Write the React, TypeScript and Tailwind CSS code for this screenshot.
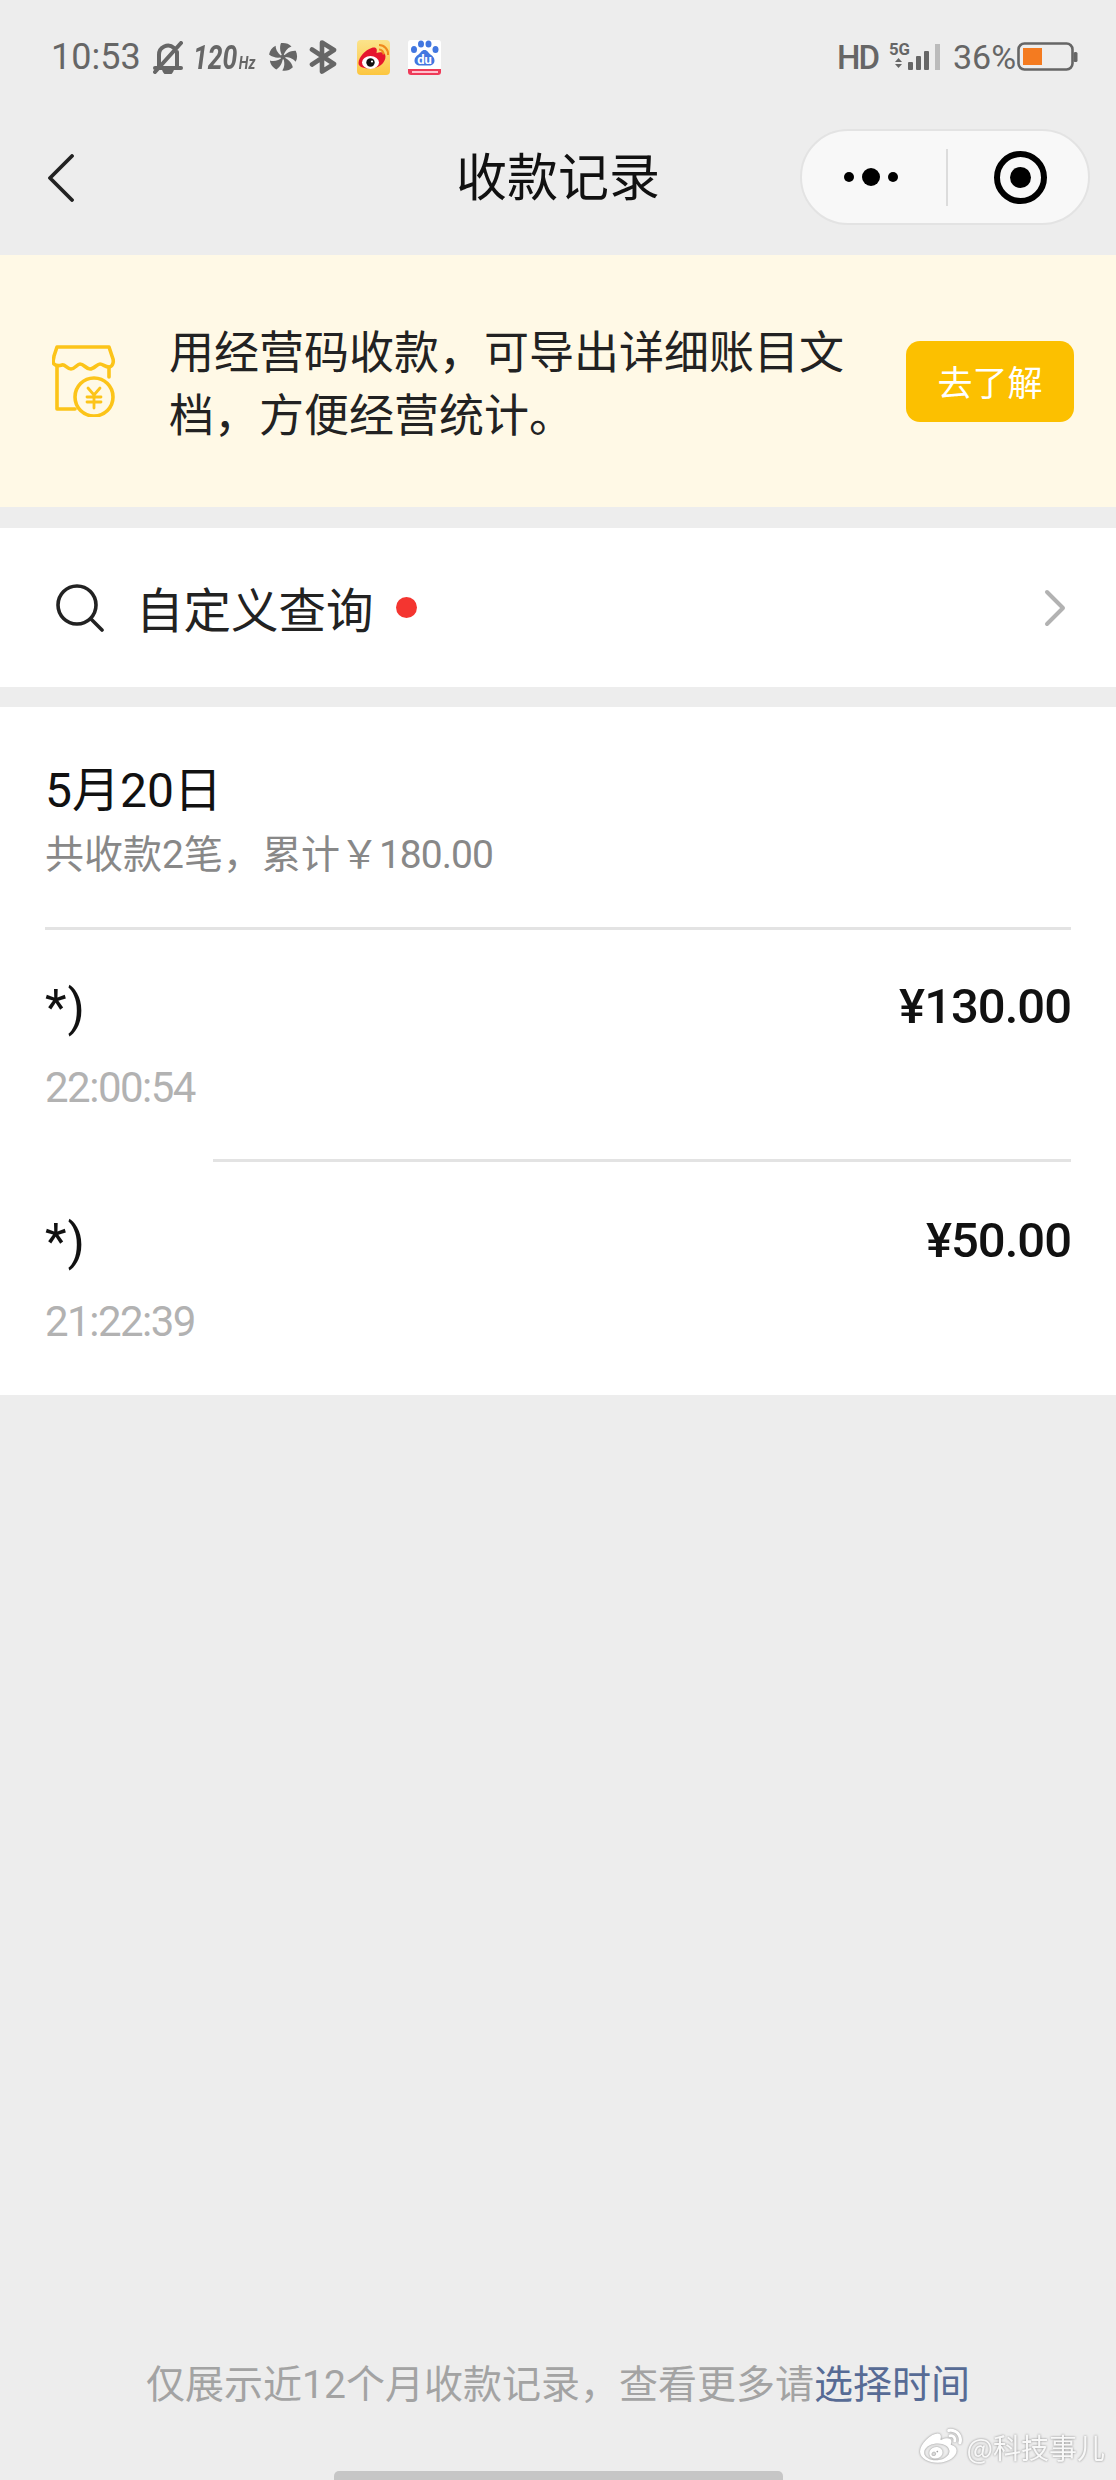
import React from 'react';
import { FaWeibo } from 'react-icons/fa';

function BellOff() {
  return (
    <svg width="30" height="33" viewBox="0 0 30 33" className="ml-[15px] shrink-0" fill="none" stroke="#666" strokeWidth="4" strokeLinecap="round" strokeLinejoin="round">
      <path d="M6 26V14a9 9 0 0 1 15-7" />
      <path d="M24 11v15" />
      <path d="M2 27h26" />
      <path d="M2 31 28 2" />
      <path d="M11 28a4 4 0 0 0 8 0z" fill="#666" />
    </svg>
  );
}

function Fan() {
  const blade = 'M15 15C12.500 11 11 6 13 1c4-.5 8 .5 10.500 3.500C19 6 16.500 10 15 15z';
  return (
    <svg width="30" height="30" viewBox="0 0 30 30" className="ml-[13px] shrink-0" fill="#666">
      {[0, 72, 144, 216, 288].map((r) => (
        <path key={r} d={blade} transform={`rotate(${r} 15 15)`} />
      ))}
      <circle cx="15" cy="15" r="2.500" />
    </svg>
  );
}

function Bluetooth() {
  return (
    <svg width="28" height="34" viewBox="0 0 28 34" className="ml-[11px] shrink-0" fill="none" stroke="#666" strokeWidth="4.600" strokeLinejoin="round" strokeLinecap="round">
      <path d="M3 9.500 25 24 13 31.500V2.500L25 10 3 24.500" />
    </svg>
  );
}

function WeiboApp() {
  return (
    <div className="ml-[20px] h-[35px] w-[33px] shrink-0 overflow-hidden rounded-[4px] bg-gradient-to-b from-[#fbe38a] to-[#fcc63e]">
      <svg viewBox="0 0 33 35" width="33" height="35" className="block">
        <path d="M1.500 23c0-6 7-13 13-15 5-1.500 6 1 5 5 5-1.500 9-.5 9 3.500 0 6.500-7 12-15 12-7 0-12-1.500-12-5.500z" fill="#e6162d" />
        <ellipse cx="13.500" cy="22.500" rx="8.500" ry="6.500" fill="#fff" />
        <circle cx="13.500" cy="22.500" r="4.200" fill="#111" />
        <circle cx="15" cy="21.500" r="1.100" fill="#fff" />
        <path d="M22 5a9 9 0 0 1 9 10" stroke="#f08a1d" strokeWidth="2" fill="none" />
        <path d="M22 9.500a4.500 4.500 0 0 1 4.500 5" stroke="#f08a1d" strokeWidth="2" fill="none" />
      </svg>
    </div>
  );
}

function BaiduApp() {
  return (
    <div className="ml-[18px] flex h-[35px] w-[33px] shrink-0 flex-col overflow-hidden rounded-[3px] bg-white">
      <svg viewBox="0 0 33 29" width="33" height="29" className="block">
        <g fill="#4277e0">
          <ellipse cx="6" cy="9.500" rx="3" ry="3.500" />
          <ellipse cx="13" cy="4" rx="3" ry="3.500" />
          <ellipse cx="20.500" cy="4" rx="3" ry="3.500" />
          <ellipse cx="27.500" cy="9.500" rx="3" ry="3.500" />
          <path d="M16.500 10c3 0 3.500 2.500 6 4.500 2.500 1.500 4 3.500 4 6 0 3.500-2.500 5-5.500 5h-9c-3 0-5.500-1.500-5.500-5 0-2.500 1.500-4.500 4-6 2.500-2 3-4.500 6-4.500z" />
        </g>
        <text x="16.500" y="24" textAnchor="middle" fontSize="13" fontWeight="700" fontFamily="Roboto" fill="#fff">du</text>
      </svg>
      <div className="flex flex-1 items-center justify-center bg-[#ee3a58]">
        <div className="h-[2px] w-[26px] bg-[#ffc0cc]" />
      </div>
    </div>
  );
}

function Signal() {
  return (
    <svg width="52" height="36" viewBox="0 -6 52 36" className="ml-[12px] mb-[6px] shrink-0 self-center">
      <text x="0" y="13" fontSize="17" fontWeight="700" fontFamily="Roboto" fill="#666" textLength="21" lengthAdjust="spacingAndGlyphs">5G</text>
      <path d="M6 20l3.500-4 3.500 4zM6 22l3.500 4 3.500-4z" fill="#666" />
      <rect x="19" y="20" width="5" height="8" rx="1" fill="#666" />
      <rect x="27" y="14" width="5" height="14" rx="1" fill="#666" />
      <rect x="35" y="9" width="5" height="19" rx="1" fill="#666" />
      <rect x="46" y="2" width="5" height="26" fill="#bbb" />
    </svg>
  );
}

function Battery() {
  return (
    <svg width="61" height="30" viewBox="0 0 61 30" className="ml-[4px] shrink-0">
      <rect x="1.500" y="1.500" width="54" height="26" rx="6" fill="none" stroke="#666" strokeWidth="2.600" />
      <rect x="6" y="6" width="19" height="17" fill="#f47b20" />
      <rect x="56.500" y="10" width="4" height="10" rx="1.500" fill="#666" />
    </svg>
  );
}

function StatusBar() {
  return (
    <div className="flex h-[112px] items-center justify-between pl-[51px] pr-[38px] pt-[2px] font-['Roboto','Noto_Sans_CJK_SC',sans-serif] text-[#666]">
      <div className="flex items-center">
        <span className="w-[87px] whitespace-nowrap text-[36px] leading-none">10:53</span>
        <BellOff />
        <span className="ml-[10px] flex w-[62px] origin-left scale-x-[0.78] items-baseline whitespace-nowrap text-[34px] font-bold italic leading-none">
          120<span className="ml-[2px] text-[18px]">Hz</span>
        </span>
        <Fan />
        <Bluetooth />
        <WeiboApp />
        <BaiduApp />
      </div>
      <div className="flex items-center">
        <span className="w-[40px] whitespace-nowrap text-[33px] font-medium leading-none tracking-[-2px]">HD</span>
        <Signal />
        <span className="ml-[12px] w-[60px] whitespace-nowrap text-[34px] leading-none">36%</span>
        <Battery />
      </div>
    </div>
  );
}

function NavBar() {
  return (
    <div className="relative mb-[13px] flex h-[130px] items-center justify-between pl-[48px] pr-[26px]">
      <svg width="26" height="48" viewBox="0 0 26 48" className="mt-[2px]" fill="none" stroke="#222" strokeWidth="3.800" strokeLinecap="round" strokeLinejoin="round">
        <path d="M24 2 2 24l22 22" />
      </svg>
      <h1 className="absolute left-0 right-0 top-[27px] text-center text-[51px] font-normal leading-[70px] text-[#111]">收款记录</h1>
      <div className="flex h-[96px] w-[290px] items-center rounded-full border-2 border-[#e3e3e3] bg-[#f8f8f8]">
        <div className="flex w-[144px] items-center justify-center gap-[8px] pr-[6px]">
          <span className="h-[10px] w-[10px] rounded-full bg-black" />
          <span className="h-[18px] w-[18px] rounded-full bg-black" />
          <span className="h-[10px] w-[10px] rounded-full bg-black" />
        </div>
        <div className="h-[57px] w-[2px] bg-[#dcdcdc]" />
        <div className="flex flex-1 items-center justify-center pl-[4px]">
          <div className="flex h-[53px] w-[53px] items-center justify-center rounded-full border-[6px] border-black">
            <span className="h-[21px] w-[21px] rounded-full bg-black" />
          </div>
        </div>
      </div>
    </div>
  );
}

function StoreIcon() {
  return (
    <svg width="64" height="72" viewBox="0 0 64 72" className="shrink-0" fill="none" stroke="#fcc419" strokeWidth="3.600" strokeLinejoin="round" strokeLinecap="round">
      <path d="M5 2h52l4 12c1 4-1 8-4 8-4 0-6-3-9-3-3 0-6 5-10 5s-6-5-10-5c-3 0-5 5-9 5s-6-5-9-4c-3 1-6 1-8-1-2-2 0-6 0-8z" />
      <path d="M5 22v42h18" />
      <path d="M57 22v10" />
      <circle cx="42" cy="52" r="19" fill="#fff9e6" />
      <path d="M36 43l6 7 6-7M35 52h14M35 57h14M42 50v13" strokeWidth="2.800" />
    </svg>
  );
}

function Banner() {
  return (
    <div className="flex h-[252px] items-center bg-[#fff9e6] pl-[52px] pr-[42px]">
      <StoreIcon />
      <p className="ml-[53px] w-[690px] text-[45px] leading-[63px] text-[#222]">用经营码收款，可导出详细账目文档，方便经营统计。</p>
      <div className="ml-auto flex h-[81px] w-[168px] items-center justify-center rounded-[14px] bg-[#fcc000] text-[35px] text-white">去了解</div>
    </div>
  );
}

function SearchRow() {
  return (
    <div className="mt-[21px] flex h-[159px] items-center bg-white pl-[56px] pr-[50px]">
      <svg width="48" height="48" viewBox="0 0 48 48" fill="none" stroke="#222" strokeWidth="3.600" strokeLinecap="round">
        <circle cx="21" cy="21" r="19" />
        <path d="m35 35 11 11" />
      </svg>
      <span className="ml-[32px] text-[47.500px] leading-none text-[#222]">自定义查询</span>
      <span className="ml-[22px] h-[21px] w-[21px] rounded-full bg-[#f43530]" />
      <svg width="22" height="38" viewBox="0 0 22 38" className="ml-auto" fill="none" stroke="#b2b2b2" strokeWidth="4" strokeLinecap="round" strokeLinejoin="round">
        <path d="m3 3 16 16L3 35" />
      </svg>
    </div>
  );
}

function Row({ time, amount, h }: { time: string; amount: string; h: string }) {
  return (
    <div className={`flex justify-between ${h}`}>
      <div className="flex flex-col">
        <span className="mt-[47px] h-[62px] text-[50px] leading-[62px] tracking-[1px] text-[#111]">*)</span>
        <span className="mt-[24px] text-[42px] leading-[50px] tracking-[-1.500px] text-[#b2b2b2]">{time}</span>
      </div>
      <span className="mt-[46px] h-[62px] text-[49px] font-medium leading-[62px] tracking-[-1px] text-[#111]">{amount}</span>
    </div>
  );
}

function Records() {
  return (
    <div className="mt-[20px] flex h-[688px] flex-col bg-white pl-[45px] pr-[45px] font-['Roboto','Noto_Sans_CJK_SC',sans-serif]">
      <div className="h-[220px] pt-[54px]">
        <div className="text-[48px] leading-[60px] text-[#111]">5月20日</div>
        <div className="mt-[6px] text-[39px] leading-[56px] text-[#888]">
          共收款2笔，累计￥<span className="tracking-[-1px]">180.00</span>
        </div>
      </div>
      <div className="h-[3px] bg-[#e3e3e3]" />
      <Row time="22:00:54" amount="¥130.00" h="h-[229px]" />
      <div className="ml-[168px] h-[3px] bg-[#e3e3e3]" />
      <Row time="21:22:39" amount="¥50.00" h="flex-1 pt-[2px]" />
    </div>
  );
}

export default function App() {
  return (
    <div className="relative flex h-[2480px] w-[1116px] flex-col overflow-hidden bg-[#ededed] font-['Noto_Sans_CJK_SC',sans-serif]">
      <StatusBar />
      <NavBar />
      <Banner />
      <SearchRow />
      <Records />
      <div className="mt-auto mb-[56px] text-center font-['Roboto','Noto_Sans_CJK_SC',sans-serif] text-[39px] leading-[60px] text-[#a3a3a3]">
        仅展示近12个月收款记录，查看更多请<span className="text-[#576b95]">选择时间</span>
      </div>
      <div className="mx-auto h-[9px] w-[449px] rounded-t-[5px] bg-[#c6c6c6]" />
      <div className="absolute bottom-[12px] right-[11px] flex items-center drop-shadow-[0_0_1px_#8a8a8a]">
        <FaWeibo size={42} color="#fff" />
        <span className="ml-[5px] whitespace-nowrap text-[28px] leading-none text-[#f8f8f8]">@科技事儿</span>
      </div>
    </div>
  );
}
